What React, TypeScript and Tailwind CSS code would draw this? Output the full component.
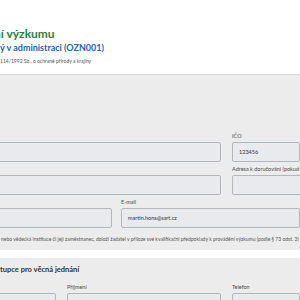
import React from 'react';

interface FieldProps {
  label?: string;
  value?: string;
}

const Field: React.FC<FieldProps> = ({ label, value }) => (
  <div className="flex flex-col">
    <label className="h-[8px] text-[5.5px] leading-[8px] text-[#4a4a4a] whitespace-nowrap">{label}</label>
    <div className="mt-[2px] h-[20px] rounded-[2px] border border-[#b4b7ba] bg-[#e8eaed] px-[6px] flex items-center text-[5.5px] text-[#333] whitespace-nowrap">
      {value}
    </div>
  </div>
);

export default function App() {
  return (
    <div className="w-[300px] h-[300px] overflow-hidden bg-white font-['Lato',sans-serif]">
      {/* header */}
      <header className="h-[75px] border-b border-[#dcdcdc] pt-[27px] whitespace-nowrap">
        <h1 className="-ml-[6px] text-[12px] leading-[14px] font-bold text-[#2f7d3b]">ní výzkumu</h1>
        <h2 className="mt-[1px] text-[9px] leading-[12px] font-bold text-[#1b63b5]">ý v administraci (OZN001)</h2>
        <p className="mt-[4px] text-[5px] leading-[7px] text-[#555]">114/1992 Sb., o ochraně přírody a krajiny</p>
      </header>

      {/* zadatel */}
      <section className="bg-[#ececec] pt-[57px] pb-[7px]">
        <div className="-ml-[60px] flex flex-col gap-y-[3px]">
          <div className="grid grid-cols-[281px_1fr] gap-x-[11px]">
            <Field />
            <Field label="IČO" value="123456" />
          </div>
          <div className="grid grid-cols-[281px_1fr] gap-x-[11px]">
            <Field />
            <Field label="Adresa k doručování (pokud se liší)" />
          </div>
          <div className="grid grid-cols-[172px_1fr] gap-x-[9px]">
            <Field />
            <Field label="E-mail" value="martin.hons@sart.cz" />
          </div>
        </div>
        <p className="mt-[8px] pl-[1px] text-[5px] leading-[7px] text-[#555] whitespace-nowrap">
          nebo vědecká instituce či její zaměstnanec, doloží žadatel v příloze své kvalifikační předpoklady k provádění výzkumu (podle § 73 odst. 3)
        </p>
      </section>

      {/* zastupce */}
      <section className="mt-[8px] bg-[#ececec] pt-[7px] pb-[10px]">
        <h3 className="text-[7.5px] leading-[9px] font-bold text-[#333] whitespace-nowrap">tupce pro věcná jednání</h3>
        <div className="mt-[9px] -ml-[60px] grid grid-cols-[116px_154px_1fr] gap-x-[11px]">
          <Field />
          <Field label="Příjmení" />
          <Field label="Telefon" />
        </div>
      </section>
    </div>
  );
}
